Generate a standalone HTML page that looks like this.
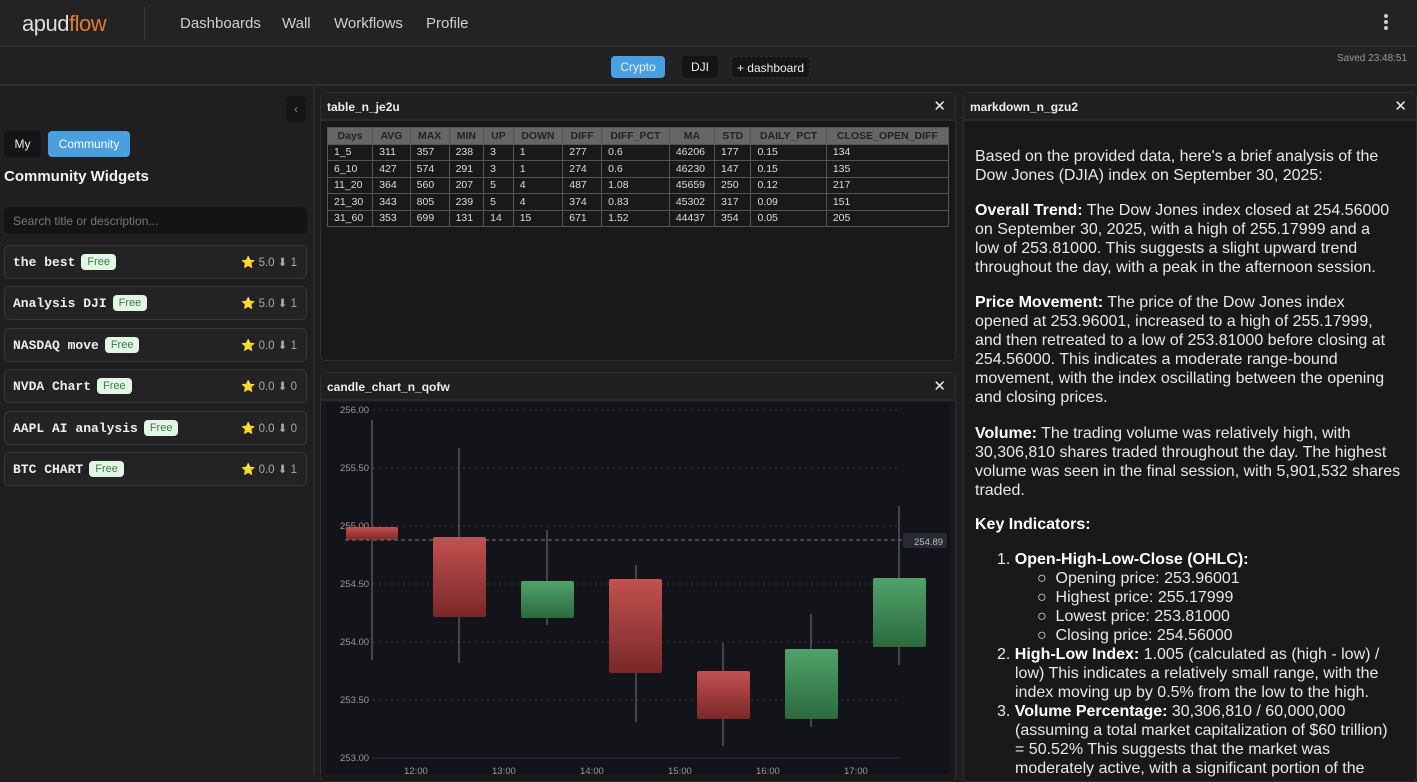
<!DOCTYPE html>
<html><head><meta charset="utf-8"><style>
*{box-sizing:border-box;margin:0;padding:0}
body{width:1417px;height:774px;overflow:hidden;background:#1f1f21;font-family:"Liberation Sans",sans-serif;color:#ddd;position:relative}
.a{position:absolute}
.nav{left:0;top:0;width:1417px;height:47px;background:#232325;border-bottom:2px solid #2e2e30}
.nav .l{font-size:15px;color:#cfcfcf;top:15px}
.bar{left:0;top:48px;width:1417px;height:38px;background:#222224;border-bottom:2px solid #2e2e30}
.btn{top:56px;height:22px;font-size:12px;line-height:22px;text-align:center;border-radius:4px;color:#eee}
.side{left:0;top:87px;width:315px;height:687px;background:#1f1f21;border-right:2px solid #2b2b2d}
.card{left:4px;width:303px;height:34px;border:1px solid #38383a;border-radius:5px;background:#232325}
.card .t{position:absolute;left:8px;top:8px;font-family:"Liberation Mono",monospace;font-weight:bold;font-size:13px;color:#eee}
.free{display:inline-block;margin-left:6px;background:#e3f6e6;color:#3d7a4a;font-family:"Liberation Sans",sans-serif;font-weight:normal;font-size:11px;padding:2px 6px;border-radius:4px;vertical-align:1px}
.card .r{position:absolute;right:9px;top:9px;font-size:11.5px;color:#aaa}
.panel{background:#19191b;border:1px solid #2e2e30;border-radius:5px}
.ph{height:28px;border-bottom:2px solid #2b2b2d;font-size:12px;font-weight:bold;color:#eee;padding:7px 6px;position:relative;background:#202022}
.ph .x{position:absolute;right:9px;top:4px;font-size:15px;font-weight:normal;color:#eee}
table{border-collapse:collapse;font-size:10.5px;color:#ddd}
td,th{border:1px solid #555;padding:0 6px;height:16.5px;text-align:left}
th{background:#666;color:#222;font-weight:bold;text-align:center}
.md{font-size:16px;line-height:19px;color:#e8e8e8;white-space:nowrap}
.md b{color:#fff}
</style></head><body>
<div class="a nav">
 <div class="a" style="left:22px;top:11px;font-size:22px;color:#ddd;letter-spacing:-0.5px">apud<span style="color:#e07a2e">flow</span></div>
 <div class="a" style="left:144px;top:7px;width:1px;height:33px;background:#3a3a3c"></div>
 <div class="a l" style="left:180px">Dashboards</div>
 <div class="a l" style="left:282px">Wall</div>
 <div class="a l" style="left:334px">Workflows</div>
 <div class="a l" style="left:426px">Profile</div>
 <div class="a" style="left:1384px;top:14px;width:4px">
  <div style="width:4px;height:4px;border-radius:2px;background:#ccc;margin-bottom:2px"></div><div style="width:4px;height:4px;border-radius:2px;background:#ccc;margin-bottom:2px"></div><div style="width:4px;height:4px;border-radius:2px;background:#ccc"></div></div>
</div>
<div class="a bar"></div>
<div class="a btn" style="left:611px;width:54px;background:#4a9fe0">Crypto</div>
<div class="a btn" style="left:682px;width:36px;background:#151517">DJI</div>
<div class="a btn" style="left:731px;width:79px;background:#151517;border:1px dashed #333">+ dashboard</div>
<div class="a" style="left:1337px;top:53px;font-size:10px;color:#999">Saved 23:48:51</div>

<div class="a side"></div>
<div class="a" style="left:286px;top:96px;width:20px;height:26px;background:#161618;border-radius:4px;color:#888;font-size:12px;text-align:center;line-height:26px">‹</div>
<div class="a" style="left:4px;top:131px;width:37px;height:26px;background:#151517;border-radius:4px;font-size:12px;line-height:26px;text-align:center;color:#eee">My</div>
<div class="a" style="left:48px;top:131px;width:82px;height:26px;background:#4a9fe0;border-radius:4px;font-size:12px;line-height:26px;text-align:center;color:#fff">Community</div>
<div class="a" style="left:4px;top:168px;font-size:15px;font-weight:bold;color:#f2f2f2">Community Widgets</div>
<div class="a" style="left:4px;top:207px;width:303px;height:27px;background:#141416;border-radius:5px;font-size:12px;color:#777;padding:7px 9px">Search title or description...</div>
<div class="a card" style="top:245px"><div class="t">the best<span class="free">Free</span></div><div class="r">⭐ 5.0 ⬇ 1</div></div>
<div class="a card" style="top:286px"><div class="t">Analysis DJI<span class="free">Free</span></div><div class="r">⭐ 5.0 ⬇ 1</div></div>
<div class="a card" style="top:328px"><div class="t">NASDAQ move<span class="free">Free</span></div><div class="r">⭐ 0.0 ⬇ 1</div></div>
<div class="a card" style="top:369px"><div class="t">NVDA Chart<span class="free">Free</span></div><div class="r">⭐ 0.0 ⬇ 0</div></div>
<div class="a card" style="top:411px"><div class="t">AAPL AI analysis<span class="free">Free</span></div><div class="r">⭐ 0.0 ⬇ 0</div></div>
<div class="a card" style="top:452px"><div class="t">BTC CHART<span class="free">Free</span></div><div class="r">⭐ 0.0 ⬇ 1</div></div>

<div class="a panel" style="left:320px;top:92px;width:636px;height:269px">
 <div class="ph">table_n_je2u<span class="x">✕</span></div>
 <table style="margin:6px 0 0 6px;width:622px">
 <tr><th>Days</th><th>AVG</th><th>MAX</th><th>MIN</th><th>UP</th><th>DOWN</th><th>DIFF</th><th>DIFF_PCT</th><th>MA</th><th>STD</th><th>DAILY_PCT</th><th>CLOSE_OPEN_DIFF</th></tr>
 <tr><td>1_5</td><td>311</td><td>357</td><td>238</td><td>3</td><td>1</td><td>277</td><td>0.6</td><td>46206</td><td>177</td><td>0.15</td><td>134</td></tr>
 <tr><td>6_10</td><td>427</td><td>574</td><td>291</td><td>3</td><td>1</td><td>274</td><td>0.6</td><td>46230</td><td>147</td><td>0.15</td><td>135</td></tr>
 <tr><td>11_20</td><td>364</td><td>560</td><td>207</td><td>5</td><td>4</td><td>487</td><td>1.08</td><td>45659</td><td>250</td><td>0.12</td><td>217</td></tr>
 <tr><td>21_30</td><td>343</td><td>805</td><td>239</td><td>5</td><td>4</td><td>374</td><td>0.83</td><td>45302</td><td>317</td><td>0.09</td><td>151</td></tr>
 <tr><td>31_60</td><td>353</td><td>699</td><td>131</td><td>14</td><td>15</td><td>671</td><td>1.52</td><td>44437</td><td>354</td><td>0.05</td><td>205</td></tr>
 </table>
</div>

<div class="a panel" style="left:320px;top:372px;width:636px;height:410px">
 <div class="ph">candle_chart_n_qofw<span class="x">✕</span></div>
</div>
<svg class="a" style="left:320px;top:400px" width="636" height="374" viewBox="320 400 636 374">
 <defs>
  <linearGradient id="r" x1="0" y1="0" x2="0" y2="1"><stop offset="0" stop-color="#c25150"/><stop offset="1" stop-color="#7a2828"/></linearGradient>
  <linearGradient id="g" x1="0" y1="0" x2="0" y2="1"><stop offset="0" stop-color="#50a36a"/><stop offset="1" stop-color="#2c6a3e"/></linearGradient>
 </defs>
 <rect x="326" y="403" width="624" height="371" fill="#131419"/>
 <g stroke="#3a3d44" stroke-dasharray="2 4" stroke-width="1">
  <line x1="373" y1="410" x2="900" y2="410"/><line x1="373" y1="468" x2="900" y2="468"/><line x1="373" y1="526" x2="900" y2="526"/><line x1="373" y1="584" x2="900" y2="584"/><line x1="373" y1="642" x2="900" y2="642"/><line x1="373" y1="700" x2="900" y2="700"/>
 </g>
 <line x1="372" y1="758" x2="900" y2="758" stroke="#2e3340"/>
 <g fill="#999" font-size="9.5" font-family="Liberation Sans">
  <text x="340" y="413">256.00</text><text x="340" y="471">255.50</text><text x="340" y="529">255.00</text><text x="340" y="587">254.50</text><text x="340" y="645">254.00</text><text x="340" y="703">253.50</text><text x="340" y="761">253.00</text>
  <text x="404" y="774">12:00</text><text x="492" y="774">13:00</text><text x="580" y="774">14:00</text><text x="668" y="774">15:00</text><text x="756" y="774">16:00</text><text x="844" y="774">17:00</text>
 </g>
 <g stroke="#666" stroke-width="1.2">
  <line x1="372" y1="420" x2="372" y2="660"/><line x1="459" y1="448" x2="459" y2="663"/><line x1="547" y1="530" x2="547" y2="625"/><line x1="636" y1="565" x2="636" y2="722"/><line x1="723" y1="643" x2="723" y2="746"/><line x1="811" y1="614" x2="811" y2="727"/><line x1="899" y1="506" x2="899" y2="665"/>
 </g>
 <rect x="346" y="527" width="52" height="13" rx="2" fill="url(#r)"/>
 <rect x="433" y="537" width="53" height="80" rx="2" fill="url(#r)"/>
 <rect x="521" y="581" width="53" height="37" rx="2" fill="url(#g)"/>
 <rect x="609" y="579" width="53" height="94" rx="2" fill="url(#r)"/>
 <rect x="697" y="671" width="53" height="48" rx="2" fill="url(#r)"/>
 <rect x="785" y="649" width="53" height="70" rx="2" fill="url(#g)"/>
 <rect x="873" y="578" width="53" height="69" rx="2" fill="url(#g)"/>
 <line x1="345" y1="540" x2="903" y2="540" stroke="#777" stroke-dasharray="4 3"/>
 <rect x="903" y="533" width="44" height="15" rx="2" fill="#262a33"/>
 <text x="914" y="545" fill="#bbb" font-size="9.5" font-family="Liberation Sans">254.89</text>
</svg>

<div class="a panel" style="left:963px;top:92px;width:454px;height:690px">
 <div class="ph">markdown_n_gzu2<span class="x">✕</span></div>
</div>
<div class="a md" style="left:975px;top:147px">
Based on the provided data, here's a brief analysis of the<br>Dow Jones (DJIA) index on September 30, 2025:
</div>
<div class="a md" style="left:975px;top:201px">
<b>Overall Trend:</b> The Dow Jones index closed at 254.56000<br>on September 30, 2025, with a high of 255.17999 and a<br>low of 253.81000. This suggests a slight upward trend<br>throughout the day, with a peak in the afternoon session.
</div>
<div class="a md" style="left:975px;top:293px">
<b>Price Movement:</b> The price of the Dow Jones index<br>opened at 253.96001, increased to a high of 255.17999,<br>and then retreated to a low of 253.81000 before closing at<br>254.56000. This indicates a moderate range-bound<br>movement, with the index oscillating between the opening<br>and closing prices.
</div>
<div class="a md" style="left:975px;top:424px">
<b>Volume:</b> The trading volume was relatively high, with<br>30,306,810 shares traded throughout the day. The highest<br>volume was seen in the final session, with 5,901,532 shares<br>traded.
</div>
<div class="a md" style="left:975px;top:515px"><b>Key Indicators:</b></div>
<div class="a md" style="left:997px;top:550px">
1. <b>Open-High-Low-Close (OHLC):</b><br>
<span style="padding-left:40px">○&nbsp; Opening price: 253.96001</span><br>
<span style="padding-left:40px">○&nbsp; Highest price: 255.17999</span><br>
<span style="padding-left:40px">○&nbsp; Lowest price: 253.81000</span><br>
<span style="padding-left:40px">○&nbsp; Closing price: 254.56000</span><br>
2. <b>High-Low Index:</b> 1.005 (calculated as (high - low) /<br>
<span style="padding-left:18px">low) This indicates a relatively small range, with the</span><br>
<span style="padding-left:18px">index moving up by 0.5% from the low to the high.</span><br>
3. <b>Volume Percentage:</b> 30,306,810 / 60,000,000<br>
<span style="padding-left:18px">(assuming a total market capitalization of $60 trillion)</span><br>
<span style="padding-left:18px">= 50.52% This suggests that the market was</span><br>
<span style="padding-left:18px">moderately active, with a significant portion of the</span>
</div>
</body></html>
